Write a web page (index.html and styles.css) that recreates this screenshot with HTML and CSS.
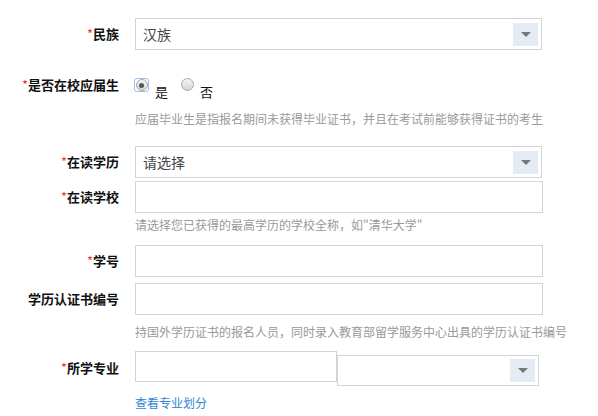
FILE: index.html
```html
<!DOCTYPE html>
<html lang="zh-CN">
<head>
<meta charset="utf-8">
<title>报名信息</title>
<link rel="stylesheet" href="styles.css">
</head>
<body>
<div class="form">
  <div class="row row-a">
    <div class="label"><span class="req">*</span>民族</div>
    <div class="control">
      <div class="select"><span class="value">汉族</span><span class="arrow"></span></div>
    </div>
  </div>

  <div class="row row-b">
    <div class="label label-top"><span class="req">*</span>是否在校应届生</div>
    <div class="control">
      <div class="radios">
        <span class="ring"><span class="radio"><span class="dot"></span></span></span><span class="opt opt-yes">是</span>
        <span class="radio plain"></span><span class="opt">否</span>
      </div>
      <div class="help help-b">应届毕业生是指报名期间未获得毕业证书，并且在考试前能够获得证书的考生</div>
    </div>
  </div>

  <div class="row row-c">
    <div class="label"><span class="req">*</span>在读学历</div>
    <div class="control">
      <div class="select"><span class="value">请选择</span><span class="arrow"></span></div>
    </div>
  </div>

  <div class="row row-d">
    <div class="label"><span class="req">*</span>在读学校</div>
    <div class="control">
      <div class="input wide"></div>
      <div class="help help-d">请选择您已获得的最高学历的学校全称，如"清华大学"</div>
    </div>
  </div>

  <div class="row row-e">
    <div class="label"><span class="req">*</span>学号</div>
    <div class="control">
      <div class="input wide"></div>
    </div>
  </div>

  <div class="row row-f">
    <div class="label">学历认证书编号</div>
    <div class="control">
      <div class="input wide"></div>
      <div class="help help-f">持国外学历证书的报名人员，同时录入教育部留学服务中心出具的学历认证书编号</div>
    </div>
  </div>

  <div class="row row-g">
    <div class="label label-g"><span class="req">*</span>所学专业</div>
    <div class="control">
      <div class="pair">
        <div class="input half"></div>
        <div class="select half-select"><span class="arrow"></span></div>
      </div>
      <a class="link" href="#">查看专业划分</a>
    </div>
  </div>
</div>
</body>
</html>
```

FILE: styles.css
```css
html, body {
  margin: 0;
  padding: 0;
  background: #fff;
}
body {
  width: 598px;
  height: 416px;
  overflow: hidden;
  font-family: "Noto Sans CJK SC", "Noto Sans", sans-serif;
  color: #333;
}
.form {
  padding-top: 18px;
}
.row {
  display: flex;
  align-items: flex-start;
}
.label {
  width: 119px;
  flex: none;
  text-align: right;
  font-size: 13px;
  font-weight: bold;
  color: #111;
  line-height: 32px;
  white-space: nowrap;
}
.req {
  color: #e4393c;
  font-weight: normal;
}
.control {
  margin-left: 16px;
  width: 420px;
}
.select, .input {
  box-sizing: border-box;
  height: 32px;
  border: 1px solid #d4d4d4;
  background: #fff;
}
.select {
  width: 407px;
  display: flex;
  align-items: center;
  justify-content: space-between;
  padding: 0 3px 0 7px;
  font-size: 14px;
  color: #444;
}
.arrow {
  width: 25px;
  height: 23px;
  background: #e4ebf5;
  position: relative;
  flex: none;
  margin-left: auto;
}
.arrow::after {
  content: "";
  position: absolute;
  left: 8px;
  top: 9px;
  border-left: 5px solid transparent;
  border-right: 5px solid transparent;
  border-top: 5px solid #777;
}
.input.wide {
  width: 408px;
}

.row-b { margin-top: 27px; }
.label-top { line-height: 16px; }
.radios {
  display: flex;
  align-items: flex-start;
  height: 22px;
  padding-top: 1px;
  box-sizing: border-box;
}
.ring {
  box-sizing: border-box;
  width: 15px;
  height: 14px;
  margin-left: -1px;
  border: 1px solid #9dbff2;
  border-radius: 3px;
  display: flex;
  align-items: center;
  justify-content: center;
  flex: none;
}
.radio {
  box-sizing: border-box;
  width: 12px;
  height: 12px;
  border-radius: 50%;
  border: 1px solid #a9a9a9;
  background: linear-gradient(#f6f6f6, #d4d4d4);
  display: flex;
  align-items: center;
  justify-content: center;
  flex: none;
}
.radio.plain {
  width: 13px;
  height: 13px;
}
.radio .dot {
  width: 5px;
  height: 5px;
  border-radius: 50%;
  background: #555;
}
.opt {
  font-size: 13px;
  line-height: 16px;
  margin-top: 6px;
  margin-left: 6px;
  color: #111;
}
.opt-yes { margin-right: 13px; }
.help {
  font-size: 12px;
  line-height: 16px;
  color: #999;
  white-space: nowrap;
}
.help-b { margin-top: 12px; }
.row-c { margin-top: 19px; }
.row-d { margin-top: 3px; }
.help-d { margin-top: 4px; }
.row-e { margin-top: 12px; }
.row-f { margin-top: 6px; }
.help-f { margin-top: 9px; }
.row-g { margin-top: 11px; }
.label-g { line-height: 31px; padding-top: 1px; }
.pair {
  display: flex;
  align-items: flex-start;
}
.input.half {
  width: 202px;
  height: 31px;
}
.select.half-select {
  width: 202px;
  height: 31px;
  margin-top: 4px;
}
.link {
  display: block;
  margin-top: 9px;
  font-size: 12px;
  line-height: 16px;
  color: #2f86d6;
  text-decoration: none;
}
```
